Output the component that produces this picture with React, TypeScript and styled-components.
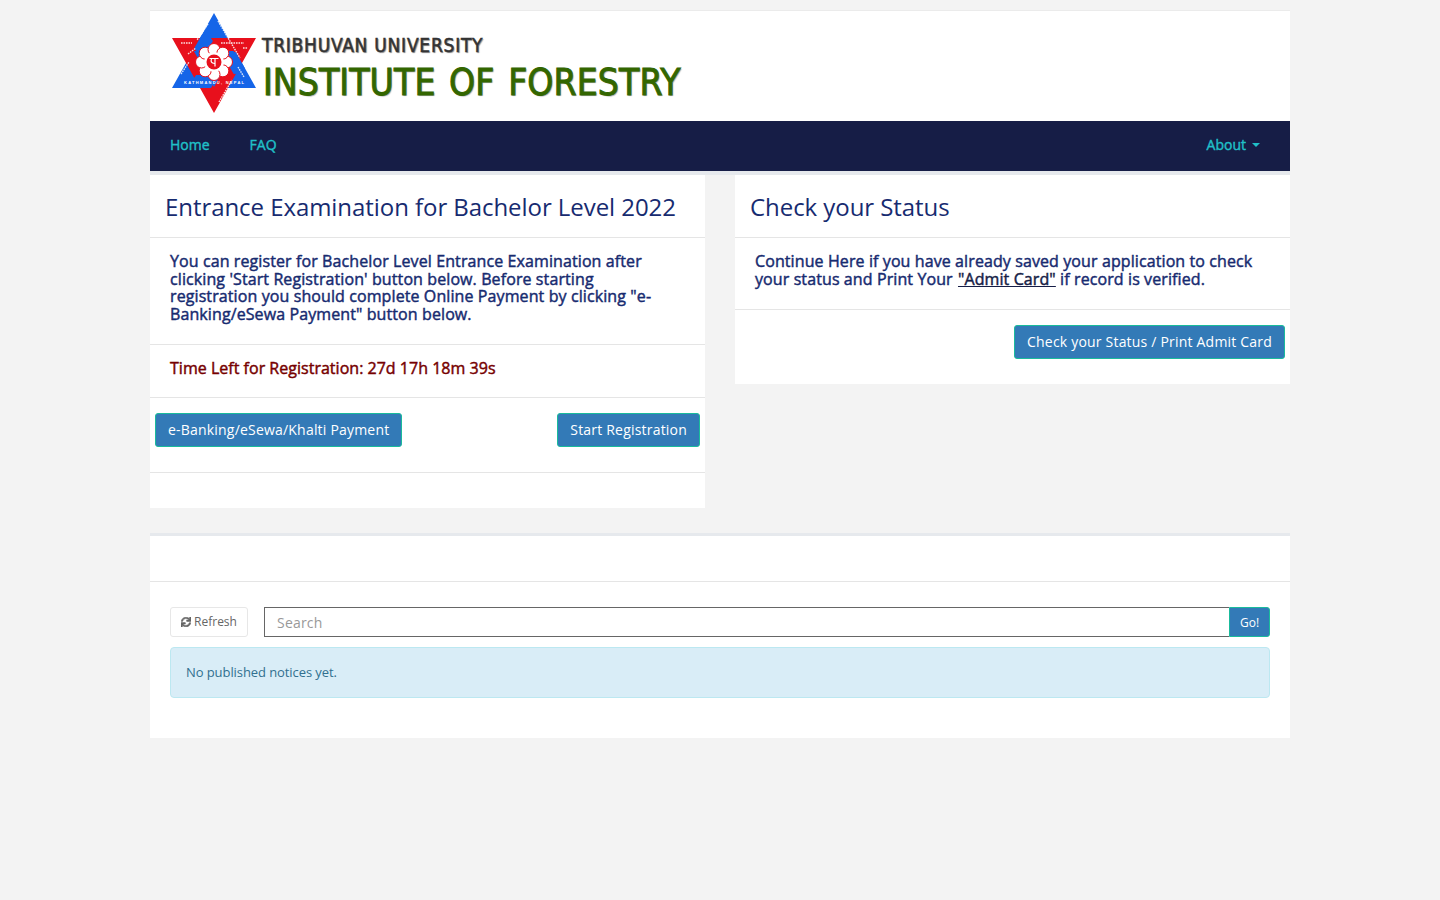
import React from 'react';
import styled, { createGlobalStyle } from 'styled-components';
import { FaSync } from 'react-icons/fa';

const GlobalStyle = createGlobalStyle`
  html, body {
    margin: 0;
    padding: 0;
    background: #f3f3f3;
    font-family: "Open Sans", "Noto Sans", sans-serif;
    color: #73879c;
  }
  * { box-sizing: border-box; }
`;

const Page = styled.div`
  width: 1140px;
  margin: 0 auto;
  padding-top: 10px;
  min-height: 900px;
`;

const Banner = styled.header`
  height: 111px;
  background: #fff;
  border-top: 1px solid #ebebeb;
  display: flex;
  align-items: flex-start;
  padding: 1px 0 0 22px;
`;

const Wordmark = styled.div`
  margin-left: 2px;
  padding-top: 20px;
  font-family: "DejaVu Sans Condensed", "DejaVu Sans", sans-serif;
  font-stretch: condensed;
`;

const University = styled.div`
  font-size: 19px;
  line-height: 26px;
  color: #333;
  letter-spacing: 0.75px;
  text-shadow: 1px 1px 1px #888;
  -webkit-text-stroke: 0.5px #333;
  white-space: nowrap;
`;

const Institute = styled.div`
  padding-left: 1px;
  font-size: 37px;
  line-height: 50px;
  color: #336600;
  letter-spacing: 0.05px;
  word-spacing: 3px;
  text-shadow: 1px 1px 1px #aaa;
  -webkit-text-stroke: 0.9px #336600;
  white-space: nowrap;
`;

const NavBar = styled.nav`
  height: 54px;
  background: #161d46;
  border-bottom: 4px solid #e6e9ed;
  display: flex;
  justify-content: space-between;
  padding: 0 20px;
`;

const NavGroup = styled.div`
  display: flex;
  gap: 40px;
`;

const NavLink = styled.a`
  height: 47px;
  display: flex;
  align-items: center;
  font-size: 14px;
  font-weight: 400;
  -webkit-text-stroke: 0.4px #20c0c8;
  color: #20c0c8;
`;

const Caret = styled.span`
  display: inline-block;
  margin-left: 6px;
  margin-right: 10px;
  border-top: 4px solid #20c0c8;
  border-left: 4px solid transparent;
  border-right: 4px solid transparent;
`;

const Columns = styled.div`
  display: grid;
  grid-template-columns: 555px 555px;
  column-gap: 30px;
  align-items: start;
`;

const Panel = styled.section`
  background: #fff;
`;

const PanelTitle = styled.h2`
  margin: 0;
  height: 63px;
  padding: 15px 15px 0;
  font-size: 24px;
  line-height: 34px;
  font-weight: 400;
  letter-spacing: -0.06px;
  color: #172b70;
  border-bottom: 1px solid #e5e5e5;
`;

const Block = styled.div<{ $flush?: boolean }>`
  padding: ${(p) => (p.$flush ? '0' : '15px 20px 20px')};
  border-bottom: 1px solid #e5e5e5;
`;

const Lead = styled.p`
  margin: 0 0 1px;
  padding-right: 4px;
  font-size: 16px;
  line-height: 17.6px;
  font-weight: 400;
  letter-spacing: 0.1px;
  -webkit-text-stroke: 0.45px #172b70;
  color: #172b70;

  a {
    margin-left: 1px;
    color: #161d46;
    -webkit-text-stroke: 0.45px #161d46;
    text-decoration: underline;
  }
`;

const Countdown = styled(Lead)`
  margin: 0;
  line-height: 17px;
  letter-spacing: 0.02px;
  color: #760000;
  -webkit-text-stroke: 0.45px #760000;
`;

const Actions = styled.div<{ $end?: boolean }>`
  display: flex;
  justify-content: ${(p) => (p.$end ? 'flex-end' : 'space-between')};
  padding: 15px 5px 25px;
`;

const Button = styled.button`
  height: 34px;
  padding: 0 12px;
  font: 400 14px/20px "Open Sans", sans-serif;
  letter-spacing: 0.2px;
  color: #fff;
  background: #337ab7;
  border: 1px solid #1abb9c;
  border-radius: 3px;
`;

const LeftFooter = styled.div`
  height: 35px;
`;

const NoticePanel = styled.section`
  margin-top: 25px;
  background: #fff;
  border-top: 3px solid #e6e9ed;
  height: 205px;
`;

const NoticeHead = styled.div`
  height: 46px;
  border-bottom: 1px solid #e5e5e5;
`;

const NoticeBody = styled.div`
  padding: 25px 20px;
`;

const Toolbar = styled.div`
  display: flex;
  gap: 16px;
  margin-bottom: 10px;
`;

const RefreshButton = styled.button`
  width: 78px;
  height: 30px;
  padding: 0;
  display: flex;
  align-items: center;
  justify-content: center;
  gap: 3px;
  font: 400 12px/18px "Open Sans", sans-serif;
  color: #666;
  background: #fff;
  border: 1px solid #e7e7e7;
  border-radius: 3px;

  svg {
    width: 10px;
    height: 10px;
    stroke: #666;
    stroke-width: 30;
  }
`;

const SearchGroup = styled.div`
  flex: 1;
  display: flex;
`;

const SearchInput = styled.input`
  flex: 1;
  height: 30px;
  padding: 1px 12px 0;
  font: 400 14px "Open Sans", sans-serif;
  letter-spacing: 0.2px;
  color: #555;
  border: 1px solid #666;
  border-right: 0;
  border-radius: 0;
  outline: none;

  &::placeholder {
    color: #999;
    opacity: 1;
  }
`;

const GoButton = styled.button`
  width: 41px;
  height: 30px;
  padding: 0;
  font: 400 12px "Open Sans", sans-serif;
  color: #fff;
  background: #337ab7;
  border: 1px solid #1abb9c;
  border-radius: 0 3px 3px 0;
`;

const Alert = styled.div`
  height: 51px;
  padding: 15px;
  font-size: 13px;
  line-height: 18px;
  letter-spacing: -0.08px;
  color: #31708f;
  background: #d9edf7;
  border: 1px solid #bce8f1;
  border-radius: 4px;
`;

const StampText = styled.text`
  font-family: "Liberation Sans", sans-serif;
  font-size: 4px;
  font-weight: 700;
  fill: #fff;
`;

const BLUE_BAND = 'M42 1 L84 76 L0 76 Z M42 27 L21.8 63 L62.2 63 Z';
const RED_BAND = 'M0 26 L84 26 L42 101 Z M21.8 39 L42 75 L62.2 39 Z';

const Emblem: React.FC = () => {
  const petals = [0, 45, 90, 135, 180, 225, 270, 315];
  return (
    <svg width="88" height="104" viewBox="0 0 88 104" aria-hidden="true">
      <defs>
        <clipPath id="blue-over">
          <circle cx="63" cy="51" r="11" />
          <circle cx="31.5" cy="69.5" r="10" />
          <circle cx="31.5" cy="32.5" r="10" />
        </clipPath>
      </defs>
      <path d={BLUE_BAND} fill="#1565e8" fillRule="evenodd" />
      <path d={RED_BAND} fill="#e8101c" fillRule="evenodd" />
      <path d={BLUE_BAND} fill="#1565e8" fillRule="evenodd" clipPath="url(#blue-over)" />
      {petals.map((a) => (
        <circle
          key={a}
          cx={42 + 12.5 * Math.cos((a * Math.PI) / 180)}
          cy={50 + 12.5 * Math.sin((a * Math.PI) / 180)}
          r="6"
          fill="#fff"
          stroke="#e8101c"
          strokeWidth="1"
        />
      ))}
      <circle cx="42" cy="50" r="10" fill="#fff" />
      <circle cx="42" cy="50" r="7.5" fill="#e8101c" />
      <path d="M37.5 46.5 H46.5 M43 46.5 V54.5 M39.5 47 Q38 51 42.5 51.5" fill="none" stroke="#fff" strokeWidth="1.2" />
      <g stroke="#fff" strokeWidth="1.4" strokeDasharray="1.6 0.9" opacity="0.85" fill="none">
        <path d="M9 31 H20" />
        <path d="M49 31 H72" />
        <path d="M71 36 H76" />
        <path d="M16 42 L24 36" />
        <path d="M46 9 L68 46" />
        <path d="M36 12 L25 28" />
        <path d="M9 62 L17 50" />
        <path d="M33 90 L24 77" />
        <path d="M47 90 L60 68" />
        <path d="M66 55 L72 65" />
      </g>
      <StampText x="12" y="72" textLength="60">KATHMANDU, NEPAL</StampText>
    </svg>
  );
};

const App: React.FC = () => (
  <Page>
    <GlobalStyle />
    <Banner>
      <Emblem />
      <Wordmark>
        <University>TRIBHUVAN UNIVERSITY</University>
        <Institute>INSTITUTE OF FORESTRY</Institute>
      </Wordmark>
    </Banner>

    <NavBar>
      <NavGroup>
        <NavLink>Home</NavLink>
        <NavLink>FAQ</NavLink>
      </NavGroup>
      <NavGroup>
        <NavLink>
          About
          <Caret />
        </NavLink>
      </NavGroup>
    </NavBar>

    <Columns>
      <Panel>
        <PanelTitle>Entrance Examination for Bachelor Level 2022</PanelTitle>
        <Block>
          <Lead>
            You can register for Bachelor Level Entrance Examination after clicking 'Start Registration' button
            below. Before starting registration you should complete Online Payment by clicking "e-Banking/eSewa
            Payment" button below.
          </Lead>
        </Block>
        <Block>
          <Countdown>Time Left for Registration: 27d 17h 18m 39s</Countdown>
        </Block>
        <Block $flush>
          <Actions>
            <Button>e-Banking/eSewa/Khalti Payment</Button>
            <Button>Start Registration</Button>
          </Actions>
        </Block>
        <LeftFooter />
      </Panel>

      <Panel>
        <PanelTitle>Check your Status</PanelTitle>
        <Block>
          <Lead>
            Continue Here if you have already saved your application to check your status and Print Your{' '}
            <a>"Admit Card"</a> if record is verified.
          </Lead>
        </Block>
        <Actions $end>
          <Button>Check your Status / Print Admit Card</Button>
        </Actions>
      </Panel>
    </Columns>

    <NoticePanel>
      <NoticeHead />
      <NoticeBody>
        <Toolbar>
          <RefreshButton>
            <FaSync />
            Refresh
          </RefreshButton>
          <SearchGroup>
            <SearchInput placeholder="Search" />
            <GoButton>Go!</GoButton>
          </SearchGroup>
        </Toolbar>
        <Alert>No published notices yet.</Alert>
      </NoticeBody>
    </NoticePanel>
  </Page>
);

export default App;
